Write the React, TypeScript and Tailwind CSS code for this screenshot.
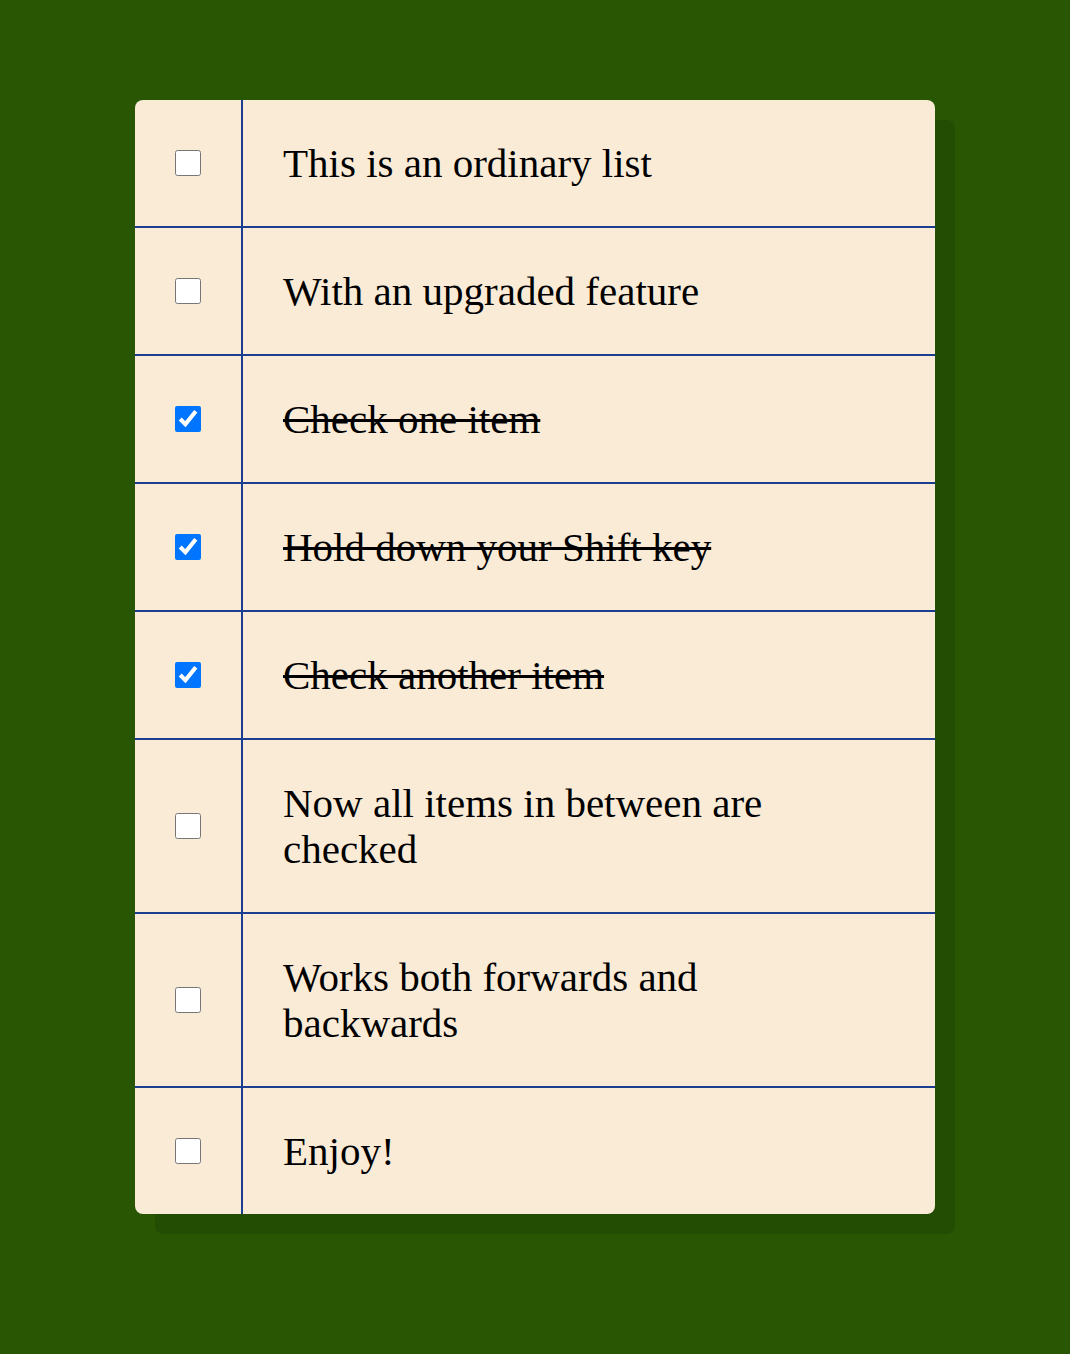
import React, { useState } from 'react';

const initialItems = [
  { text: 'This is an ordinary list', done: false },
  { text: 'With an upgraded feature', done: false },
  { text: 'Check one item', done: true },
  { text: 'Hold down your Shift key', done: true },
  { text: 'Check another item', done: true },
  { text: 'Now all items in between are checked', done: false },
  { text: 'Works both forwards and backwards', done: false },
  { text: 'Enjoy!', done: false },
];

export default function App() {
  const [items, setItems] = useState(initialItems);

  const toggle = (i: number) => {
    setItems(items.map((it, idx) => (idx === i ? { ...it, done: !it.done } : it)));
  };

  return (
    <main className="min-h-screen bg-[#285603] flex justify-center pt-[100px] pb-[140px]">
      <div className="w-[800px] h-fit bg-[#faebd7] rounded-lg overflow-hidden shadow-[20px_20px_0_rgba(0,0,0,0.1)]">
        {items.map((item, i) => (
          <div
            key={i}
            className={`flex ${i < items.length - 1 ? 'border-b-2 border-[#1a3f92]' : ''}`}
          >
            <div className="w-[108px] shrink-0 flex items-center justify-center border-r-2 border-[#1a3f92]">
              <input
                type="checkbox"
                checked={item.done}
                onChange={() => toggle(i)}
                className="w-[26px] h-[26px] m-0 cursor-pointer"
              />
            </div>
            <div className="flex-1 pl-[40px] py-10">
              <p
                className={`max-w-[575px] text-[41px] leading-[46px] text-black font-['Liberation_Serif',serif] ${
                  item.done ? 'line-through decoration-[3px]' : ''
                }`}
              >
                {item.text}
              </p>
            </div>
          </div>
        ))}
      </div>
    </main>
  );
}
